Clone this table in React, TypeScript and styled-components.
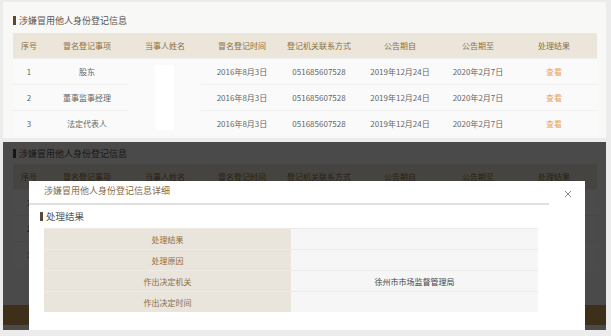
import React from "react";
import styled, { createGlobalStyle } from "styled-components";

const GlobalStyle = createGlobalStyle`
  html, body {
    margin: 0;
    padding: 0;
    background: #ececec;
  }
  body {
    width: 611px;
    height: 336px;
    overflow: hidden;
    font-family: "Noto Sans CJK SC", "Noto Sans", sans-serif;
  }
`;

interface IRecord {
  no: number;
  item: string;
  date: string;
  phone: string;
  from: string;
  to: string;
}

const records: IRecord[] = [
  { no: 1, item: "股东", date: "2016年8月3日", phone: "051685607528", from: "2019年12月24日", to: "2020年2月7日" },
  { no: 2, item: "董事监事经理", date: "2016年8月3日", phone: "051685607528", from: "2019年12月24日", to: "2020年2月7日" },
  { no: 3, item: "法定代表人", date: "2016年8月3日", phone: "051685607528", from: "2019年12月24日", to: "2020年2月7日" },
];

const columns = [
  { title: "序号", width: 32 },
  { title: "冒名登记事项", width: 84 },
  { title: "当事人姓名", width: 72 },
  { title: "冒名登记时间", width: 82 },
  { title: "登记机关联系方式", width: 72 },
  { title: "公告期自", width: 90 },
  { title: "公告期至", width: 66 },
  { title: "处理结果", width: 86 },
];

const details = [
  { label: "处理结果", value: "" },
  { label: "处理原因", value: "" },
  { label: "作出决定机关", value: "徐州市市场监督管理局" },
  { label: "作出决定时间", value: "" },
];

const Page = styled.div`
  display: flex;
  flex-direction: column;
  gap: 4px;
  padding: 2px 5px 0 3px;
`;

const Panel = styled.div<{ $height: number; $top: number }>`
  position: relative;
  height: ${(p) => p.$height}px;
  overflow: hidden;
  background: #f8f8f7;
  padding: ${(p) => p.$top}px 9px 0 10px;
  box-sizing: border-box;
`;

const SectionTitle = styled.div<{ $size?: number }>`
  display: flex;
  align-items: center;
  height: 12px;
  font-size: ${(p) => p.$size || 9}px;
  color: #555;
  &::before {
    content: "";
    width: 3px;
    height: 9px;
    margin-right: 3px;
    background: #5b4a33;
  }
`;

const Table = styled.table<{ $gap: number }>`
  width: 584px;
  margin-top: ${(p) => p.$gap}px;
  border-collapse: collapse;
  table-layout: fixed;
`;

const Th = styled.th`
  height: 25px;
  padding: 0;
  background: #ebe5da;
  color: #8d6e42;
  font-size: 8px;
  font-weight: normal;
  text-align: center;
`;

const Td = styled.td<{ $link?: boolean }>`
  height: 25px;
  padding: 0;
  background: #fafafa;
  border-top: 1px solid #efefef;
  color: ${(p) => (p.$link ? "#eba35a" : "#666")};
  font-size: 8px;
  text-align: center;
`;

const Redact = styled.div`
  width: 19px;
  height: 65px;
  margin: 0 auto 0 26px;
  background: #fff;
`;

const GoldBand = styled.div`
  height: 20px;
  margin: 38px -9px 0 -10px;
  background: #cb9d57;
`;

const Mask = styled.div`
  position: absolute;
  inset: 0;
  background: rgba(0, 0, 0, 0.7);
`;

const Modal = styled.div`
  position: absolute;
  left: 26px;
  top: 39px;
  bottom: 0;
  width: 556px;
  background: #fff;
`;

const ModalHeader = styled.div`
  display: flex;
  align-items: stretch;
`;

const ModalTitle = styled.div`
  flex: 1;
  height: 22px;
  line-height: 20px;
  padding-left: 15px;
  border-bottom: 2px solid #e0e0e0;
  font-size: 9px;
  color: #8a6a40;
`;

const Close = styled.div`
  width: 34px;
  height: 22px;
  display: flex;
  align-items: center;
  justify-content: center;
  padding: 2px 0 0 2px;
`;

const ModalBody = styled.div`
  padding: 5px 0 0 11px;
`;

const DetailTable = styled.div`
  display: grid;
  grid-template-columns: 247px 247px;
  width: 494px;
  margin: 6px 0 0 4px;
`;

const Label = styled.div`
  height: 21px;
  line-height: 21px;
  background: #e9e4dc;
  border-top: 1px solid #efebe4;
  box-sizing: border-box;
  color: #8d6e42;
  font-size: 8px;
  text-align: center;
`;

const Value = styled.div`
  height: 21px;
  line-height: 21px;
  background: #f6f6f6;
  border-top: 1px solid #ebebeb;
  box-sizing: border-box;
  color: #444;
  font-size: 8px;
  text-align: center;
`;

// full table for the page, "covered" shows only what peeks out from under the modal
const RecordTable = ({ covered }: { covered?: boolean }) => (
  <Table $gap={covered ? 5 : 7}>
    <colgroup>
      {columns.map((c) => (
        <col key={c.title} style={{ width: c.width }} />
      ))}
    </colgroup>
    <thead>
      <tr>
        {columns.map((c) => (
          <Th key={c.title}>{c.title}</Th>
        ))}
      </tr>
    </thead>
    <tbody>
      {records.map((r, index) => (
        <tr key={r.no}>
          <Td>{r.no}</Td>
          <Td>{covered ? null : r.item}</Td>
          {index === 0 && <Td rowSpan={3}>{!covered && <Redact />}</Td>}
          <Td>{covered ? null : r.date}</Td>
          <Td>{covered ? null : r.phone}</Td>
          <Td>{covered ? null : r.from}</Td>
          <Td>{covered ? null : r.to}</Td>
          <Td $link>{covered ? null : "查看"}</Td>
        </tr>
      ))}
    </tbody>
  </Table>
);

export default function App() {
  return (
    <React.Fragment>
      <GlobalStyle />
      <Page>
        <Panel $height={136} $top={12}>
          <SectionTitle>涉嫌冒用他人身份登记信息</SectionTitle>
          <RecordTable />
        </Panel>

        <Panel $height={188} $top={5}>
          <SectionTitle>涉嫌冒用他人身份登记信息</SectionTitle>
          <RecordTable covered />
          <GoldBand />
          <Mask />
          <Modal>
            <ModalHeader>
              <ModalTitle>涉嫌冒用他人身份登记信息详细</ModalTitle>
              <Close>
                <svg width="8" height="8" viewBox="0 0 8 8">
                  <path d="M1 1L7 7M7 1L1 7" stroke="#888" strokeWidth="1" />
                </svg>
              </Close>
            </ModalHeader>
            <ModalBody>
              <SectionTitle $size={9.5}>处理结果</SectionTitle>
              <DetailTable>
                {details.map((d) => (
                  <React.Fragment key={d.label}>
                    <Label>{d.label}</Label>
                    <Value>{d.value}</Value>
                  </React.Fragment>
                ))}
              </DetailTable>
            </ModalBody>
          </Modal>
        </Panel>
      </Page>
    </React.Fragment>
  );
}
